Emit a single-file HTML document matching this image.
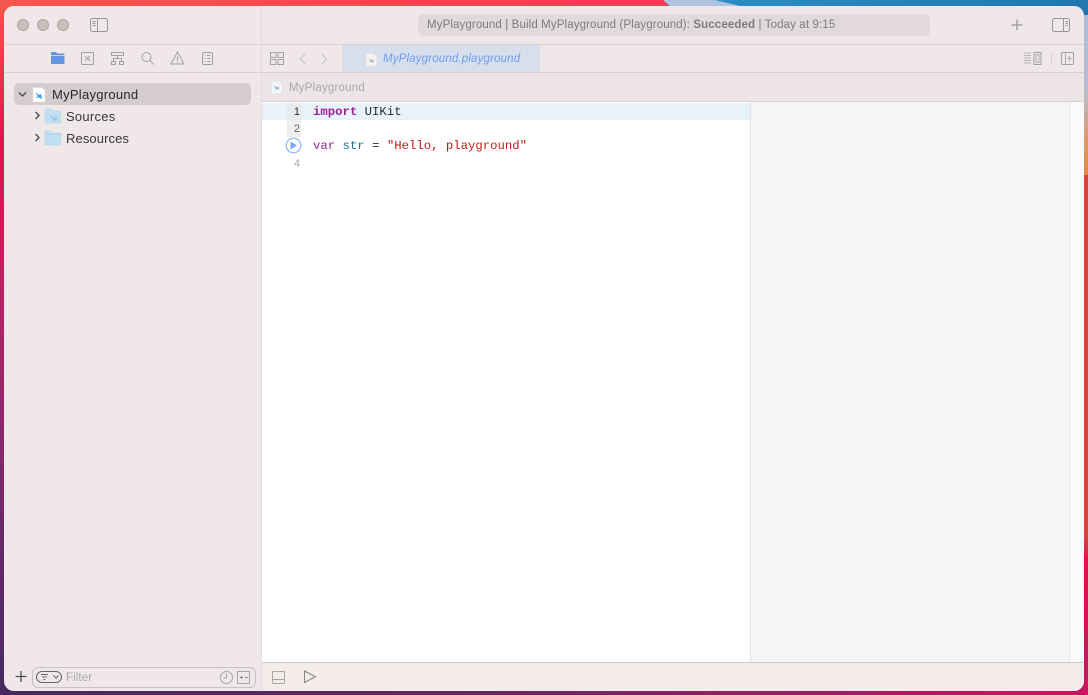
<!DOCTYPE html>
<html><head><meta charset="utf-8">
<style>
*{box-sizing:border-box;margin:0;padding:0}
html,body{width:1088px;height:695px;overflow:hidden;background:#c2185b}
body{position:relative;font-family:"Liberation Sans",sans-serif}
.a{position:absolute}
#win{position:absolute;left:4px;top:6px;width:1080px;height:685px;border-radius:10px;overflow:hidden;background:#f0e7e8}
.t{position:absolute;white-space:nowrap;font-size:13px;line-height:16px}
.m{position:absolute;white-space:nowrap;font-family:"Liberation Mono",monospace;font-size:12.3px;line-height:17px}
svg{position:absolute;overflow:visible}
</style></head><body>
<svg style="left:0;top:0" width="1088" height="695" viewBox="0 0 1088 695">
<defs>
<linearGradient id="l" x1="0" y1="0" x2="0" y2="1">
<stop offset="0" stop-color="#f4574c"/><stop offset=".2" stop-color="#e8124f"/><stop offset=".5" stop-color="#a8256b"/><stop offset=".8" stop-color="#632a68"/><stop offset="1" stop-color="#472a60"/>
</linearGradient>
<linearGradient id="b" x1="0" y1="0" x2="1" y2="0">
<stop offset="0" stop-color="#472a60"/><stop offset=".5" stop-color="#6e2664"/><stop offset="1" stop-color="#c9155f"/>
</linearGradient>
<linearGradient id="r" x1="0" y1="0" x2="0" y2="1">
<stop offset="0" stop-color="#a9bddb"/><stop offset=".5" stop-color="#bcbccb"/><stop offset=".75" stop-color="#d89a72"/><stop offset="1" stop-color="#df8a45"/>
</linearGradient>
<linearGradient id="r2" x1="0" y1="0" x2="0" y2="1">
<stop offset="0" stop-color="#df3f40"/><stop offset=".7" stop-color="#dc3f40"/><stop offset=".75" stop-color="#d8164c"/><stop offset="1" stop-color="#c4185f"/>
</linearGradient>
<linearGradient id="tp" x1="0" y1="0" x2="1" y2="0">
<stop offset="0" stop-color="#f5564c"/><stop offset="1" stop-color="#f63b50"/>
</linearGradient>
<linearGradient id="tb" x1="0" y1="0" x2="1" y2="0">
<stop offset="0" stop-color="#2d90c8"/><stop offset="1" stop-color="#1f77ad"/>
</linearGradient>
</defs>
<rect x="0" y="0" width="8" height="695" fill="url(#l)"/>
<rect x="0" y="686" width="1088" height="9" fill="url(#b)"/>
<rect x="0" y="0" width="668" height="10" fill="url(#tp)"/>
<rect x="668" y="0" width="420" height="15" fill="url(#tb)"/>
<polygon points="663,0 715,0 740,6 670,6" fill="#aec3e0"/>
<rect x="1080" y="15" width="8" height="160" fill="url(#r)"/>
<rect x="1080" y="175" width="8" height="515" fill="url(#r2)"/>
</svg>

<div id="win"></div>

<!-- backgrounds (page coords) -->
<div class="a" style="left:4px;top:6px;width:1080px;height:685px;border-radius:10px;overflow:hidden">
  <div class="a" style="left:0;top:0;width:1080px;height:38px;background:#f0e7e8"></div>
  <div class="a" style="left:0;top:38px;width:1080px;height:1px;background:#d9d0d1"></div>
  <div class="a" style="left:0;top:66px;width:1080px;height:1px;background:#d9d0d1"></div>
  <div class="a" style="left:257px;top:0;width:1px;height:685px;background:#e2dadb"></div>
  <div class="a" style="top:39px;height:27px;background:#d8dfec;left:338px;width:198px"></div>
  <div class="a" style="left:258px;top:67px;width:822px;height:28px;background:#ede4e5"></div>
  <div class="a" style="left:258px;top:95px;width:822px;height:1px;background:#d5cfd0"></div>
  <div class="a" style="left:258px;top:96px;width:822px;height:560px;background:#fff"></div>
  <div class="a" style="left:746px;top:96px;width:334px;height:560px;background:#f5f5f5;border-left:1px solid #e3e3e3"></div>
  <div class="a" style="left:1065px;top:96px;width:15px;height:560px;background:#fafafa;border-left:1px solid #e6e6e6"></div>
  <div class="a" style="left:258px;top:97px;width:488px;height:17px;background:#e8f2fb"></div>
  <div class="a" style="left:283px;top:97px;width:14px;height:34px;background:#efefef"></div>
  <div class="a" style="left:283px;top:97px;width:14px;height:17px;background:#e6ebf0"></div>
  <div class="a" style="left:258px;top:656px;width:822px;height:1px;background:#cfcbcb"></div>
  <div class="a" style="left:258px;top:657px;width:822px;height:28px;background:#f4ebeb"></div>
  <div class="a" style="left:414px;top:8px;width:512px;height:22px;border-radius:5px;background:#e2dada"></div>
  <div class="a" style="left:10px;top:77px;width:237px;height:22px;border-radius:5px;background:#d5cdcd"></div>
  <div class="a" style="left:28px;top:661px;width:224px;height:21px;border-radius:6px;border:1px solid #c9c1c2;background:#f0e8e8"></div>
</div>

<!-- traffic lights -->
<div class="a" style="left:17px;top:19px;width:12px;height:12px;border-radius:50%;background:#c8bfbf;border:1px solid #aea5a5"></div>
<div class="a" style="left:37px;top:19px;width:12px;height:12px;border-radius:50%;background:#c8bfbf;border:1px solid #aea5a5"></div>
<div class="a" style="left:57px;top:19px;width:12px;height:12px;border-radius:50%;background:#c8bfbf;border:1px solid #aea5a5"></div>

<!-- toolbar icons -->
<svg style="left:0;top:0" width="1088" height="695" viewBox="0 0 1088 695" fill="none">
  <g stroke="#9a9494" stroke-width="1">
    <rect x="90.5" y="18.5" width="17" height="13" rx="2"/><path d="M97.5 18.5v13M92.5 21.5h3M92.5 23.5h3M92.5 25.5h3"/>
    <rect x="1052.5" y="18.5" width="17" height="13" rx="2"/><path d="M1063.5 18.5v13M1065.5 21.5h2.5M1065.5 23.5h2.5M1065.5 25.5h2.5"/>
    <path d="M1017 19.5v11M1011.5 25h11" stroke-width="1.3"/>
  </g>
  <!-- navigator -->
  <path d="M51 53q0-1 1-1h4l1.500 1.500h6q1 0 1 1V63q0 1-1 1H52q-1 0-1-1z" fill="#6394e2"/>
  <path d="M51 55.500h13.500" stroke="#f0e7e8" stroke-width=".7"/>
  <g stroke="#a5a0a0" stroke-width="1">
    <rect x="81.500" y="52.500" width="12" height="12" rx="1"/><path d="M85 56l5 5M90 56l-5 5"/>
    <path d="M111.500 52.500h12v3h-12zM117.500 55.500v3M113.500 61v-2.500h8V61M111.500 61.500h4v3h-4zM119.500 61.500h4v3h-4z"/>
    <circle cx="146.500" cy="57" r="4.500"/><path d="M150 60.500l3.500 4"/>
    <path d="M177.500 52l6.500 12h-13zM177.500 56.500v4M177.500 61.500v1.200"/>
    <rect x="202.500" y="52.500" width="10" height="12" rx="1.500"/><path d="M204.500 55.500h1M207 55.500h3.500M204.500 58.500h1M207 58.500h3.500M204.500 61.500h1M207 61.500h3.500"/>
    <!-- grid -->
    <path d="M270.500 52.500h5.500v5h-5.500zM278 52.500h5.500v5H278zM270.500 59.500h5.500v5h-5.500zM278 59.500h5.500v5H278z"/>
    <path d="M305 54l-4.500 5 4.500 5" stroke="#c4bebe"/><path d="M322 54l4.500 5-4.500 5" stroke="#c4bebe"/>
    <!-- right tools -->
    <path d="M1024 53h7M1024 55.500h7M1024 58h7M1024 60.500h7M1024 63h7" stroke-width=".8"/>
    <rect x="1034" y="52.500" width="7" height="12" /><rect x="1036" y="54.500" width="3" height="8" stroke-width=".8"/>
    <path d="M1051.500 52v13" stroke="#dad2d2"/>
    <rect x="1061.500" y="52.500" width="12" height="12" rx="1.500"/><path d="M1065.500 52.500v12M1069.500 56v5M1067 58.500h5" stroke-width=".8"/>
    <!-- bottom -->
    <path d="M21 671v11M15.500 676.500h11" stroke="#4e4a4a" stroke-width="1.300"/>
    <rect x="36.500" y="671.500" width="25" height="11" rx="5.500" stroke="#6a6565"/>
    <path d="M41 674.500h7M42 677h5M43.500 679.500h2M53.500 675.500l2.500 2.500 2.500-2.500" stroke="#6a6565"/>
    <circle cx="226.500" cy="677.500" r="6" stroke="#aaa4a4"/><path d="M226.500 673.500v4.500h-3" stroke="#aaa4a4"/>
    <rect x="237.500" y="671.500" width="12" height="12" stroke="#aaa4a4"/><path d="M240 677.500h3M241.500 676v3M245 677.500h3" stroke="#8f8989"/>
    <rect x="272.500" y="671.500" width="12" height="12" rx="1" stroke="#aaa4a4"/><path d="M272.500 679.500h12" stroke="#aaa4a4"/>
    <path d="M304.500 671v11.500l11-5.750z" stroke="#8a8585"/>
  </g>
  <!-- chevrons in tree -->
  <g stroke="#4a4646" stroke-width="1.300">
    <path d="M19 92.500l3.500 3.500 3.500-3.500"/>
    <path d="M35.500 112l3.500 3.500-3.500 3.500"/>
    <path d="M35.500 134l3.500 3.500-3.500 3.500"/>
  </g>
  <!-- playground doc -->
  <path d="M33 87.500h9l3 3v11.500H33z" fill="#fff" stroke="#e0dcdc" stroke-width=".6"/>
  <path d="M35 92l4 3 2-1 1 5-3-1.500-4 .5 3-1.500z" fill="#2f9fe8"/>
  <!-- folders -->
  <path d="M45 110.500q0-1.500 1.500-1.500h4l2 2h6q2 0 2 2V122q0 1-1.500 1h-12.500q-1.500 0-1.500-1z" fill="#bfe0f3" stroke="#a8d2ea" stroke-width=".5"/>
  <path d="M50 116l6 4M56 116v4h-4" stroke="#8cc0e4" stroke-width="1"/>
  <path d="M45 132.500q0-1.500 1.500-1.500h4l2 2h6q2 0 2 2V144q0 1-1.500 1h-12.500q-1.500 0-1.500-1z" fill="#bfe0f3" stroke="#a8d2ea" stroke-width=".5"/>
  <path d="M45.300 134.500h16.500" stroke="#a4d2ec" stroke-width=".7"/>
  <!-- tab doc icon -->
  <path d="M366 53.500h8l3 3V66h-11z" fill="#f4f4f5" stroke="#dcdcde" stroke-width=".6"/>
  <path d="M368.500 58l3 2 2-.5.500 3.500-2.500-1-3 .5 2-1z" fill="#b4b8bd"/>
  <!-- breadcrumb doc -->
  <path d="M271.500 81h8l2.500 2.500V94h-10.500z" fill="#f5f5f7" stroke="#dcdcde" stroke-width=".6"/>
  <path d="M273.500 85l3 2.200 2-.6.500 3.400-2.300-1-3 .5 2-1z" fill="#7fb8e6"/>
  <!-- run marker -->
  <circle cx="293.500" cy="145.500" r="7.300" fill="#fff" stroke="#8ab6f8" stroke-width="1.200"/>
  <path d="M290.500 141.500v8l6.500-4z" fill="#7aa8f3"/>
</svg>

<!-- text -->
<div class="t" style="left:427px;top:17px;font-size:11.500px;color:#7f7a7a;letter-spacing:.12px">MyPlayground | Build MyPlayground (Playground): <b>Succeeded</b> | Today at 9:15</div>
<div class="t" style="left:383px;top:51px;font-size:11.500px;font-style:italic;color:#6a9df0;letter-spacing:.16px">MyPlayground.playground</div>
<div class="t" style="left:289px;top:80px;font-size:11.500px;color:#aba6a6;letter-spacing:.2px">MyPlayground</div>
<div class="t" style="left:52px;top:87px;color:#2b2828;letter-spacing:.27px">MyPlayground</div>
<div class="t" style="left:66px;top:109px;color:#3a3636;letter-spacing:.25px">Sources</div>
<div class="t" style="left:66px;top:131px;color:#3a3636;letter-spacing:.1px">Resources</div>
<div class="t" style="left:66px;top:670px;font-size:11.500px;color:#aba6a6;letter-spacing:.1px">Filter</div>

<div class="m" style="left:313px;top:104px"><b style="color:#9b2393">import</b> <span style="color:#2b2b2b">UIKit</span></div>
<div class="m" style="left:313px;top:138px"><b style="color:#9b2393;font-weight:normal">var</b> <span style="color:#1f6f8f">str</span> <span style="color:#2b2b2b">=</span> <span style="color:#c41a16">"Hello, playground"</span></div>

<div class="t" style="left:283px;width:17px;top:104px;text-align:right;font-size:11px;color:#2b2b2b">1</div>
<div class="t" style="left:283px;width:17px;top:121px;text-align:right;font-size:11px;color:#666">2</div>
<div class="t" style="left:283px;width:17px;top:156px;text-align:right;font-size:11px;color:#a8a8a8">4</div>
</body></html>
